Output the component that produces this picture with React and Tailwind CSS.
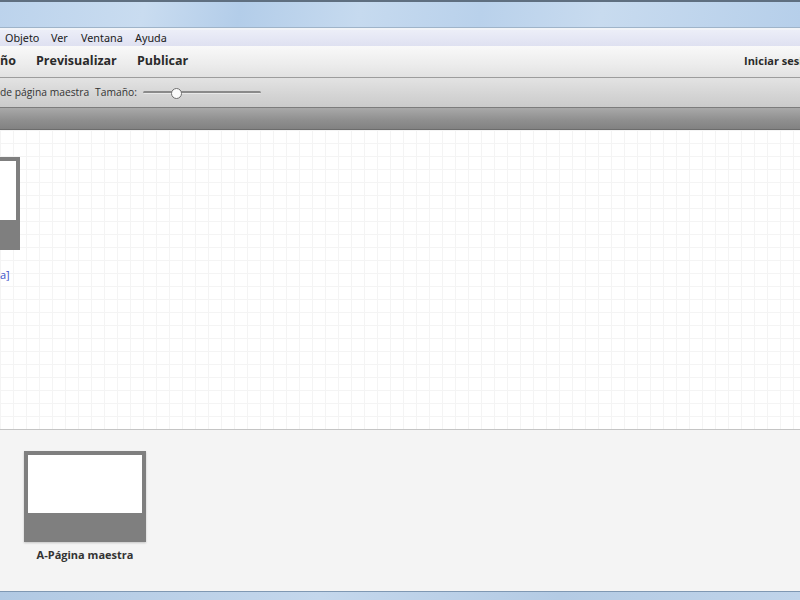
import React from "react";

export default function App() {
  return (
    <div className="w-[800px] h-[600px] overflow-hidden flex flex-col bg-[#f4f4f4] font-['Open_Sans','Liberation_Sans',sans-serif] text-[#222]">
      {/* Windows title bar */}
      <div className="h-[27px] shrink-0 border-t-2 border-[#5f6f80] bg-[linear-gradient(100deg,#bcd3ec_0%,#c9dcf0_18%,#b3cde9_30%,#c6daef_45%,#b9d1eb_60%,#c8dbef_75%,#b6cfea_100%)]" />
      <div className="h-[3px] shrink-0 border-t border-[#9fb4c9] bg-[#f2f4f8]" />
      {/* Menu bar */}
      <div className="h-[16px] shrink-0 flex items-center pl-[5px] text-[10.8px] leading-none text-[#1a1a1a] bg-[linear-gradient(#eceef8,#dfe1f1)] font-['Noto_Sans','Liberation_Sans',sans-serif]">
        <span className="w-[46px]">Objeto</span>
        <span className="w-[30px]">Ver</span>
        <span className="w-[54px]">Ventana</span>
        <span>Ayuda</span>
      </div>
      {/* Main toolbar */}
      <div className="h-[32px] shrink-0 flex items-center border-b border-[#9d9d9d] bg-[linear-gradient(#f9f9f9,#ececec_60%,#e2e2e2)] text-[12.5px] font-bold text-[#2a2a2a]">
        <span className="w-[36px]">ño</span>
        <span className="w-[101px]">Previsualizar</span>
        <span>Publicar</span>
        <span className="ml-auto whitespace-nowrap text-[11px] w-[56px] overflow-hidden">Iniciar sesión</span>
      </div>
      {/* Secondary toolbar */}
      <div className="h-[30px] shrink-0 flex items-center border-b border-[#7c7c7c] bg-[linear-gradient(#e3e3e3,#d4d4d4_60%,#cbcbcb)] text-[10.3px] text-[#333]">
        <span className="w-[95px] whitespace-nowrap">de página maestra</span>
        <span className="w-[48px]">Tamaño:</span>
        <div className="relative w-[118px] h-[12px] flex items-center">
          <div className="w-full h-[3px] rounded-full bg-[#8a8a8a] border-b border-[#e8e8e8]" />
          <div className="absolute left-[28px] top-[1px] w-[11px] h-[11px] rounded-full bg-[#fafafa] border border-[#6f6f6f]" />
        </div>
      </div>
      {/* Dark bar */}
      <div className="h-[22px] shrink-0 border-b border-[#6c6c6c] bg-[linear-gradient(#a9a9a9,#8e8e8e_60%,#828282)]" />
      {/* Canvas */}
      <div className="h-[300px] shrink-0 border-b border-[#c4c4c4] pt-[27px] bg-white bg-[linear-gradient(to_right,#f4f4f4_1px,transparent_1px),linear-gradient(to_bottom,#f4f4f4_1px,transparent_1px)] bg-[size:13px_13px]">
        <div className="w-[20px] h-[93px] border-[4px] border-l-0 border-[#7f7f7f] bg-[#7f7f7f] flex flex-col">
          <div className="h-[59px] bg-white" />
        </div>
        <div className="mt-[19px] text-[11px] leading-none text-[#3a52c8]">a]</div>
      </div>
      {/* Master pages panel */}
      <div className="flex-1 bg-[#f4f4f4] pl-[24px] pt-[21px]">
        <div className="w-[122px] flex flex-col items-center">
          <div className="w-[122px] h-[91px] border-[4px] border-[#7f7f7f] bg-[#7f7f7f] shadow-[0_1px_2px_rgba(0,0,0,0.2)]">
            <div className="h-[58px] bg-white" />
          </div>
          <div className="mt-[5px] text-[11px] font-bold text-[#333] whitespace-nowrap">A-Página maestra</div>
        </div>
      </div>
      {/* Bottom window border */}
      <div className="h-[9px] shrink-0 border-t border-[#7f98b3] bg-[linear-gradient(90deg,#b1c9e3,#c4d7ec_40%,#b4cbe4_70%,#c0d4ea)]" />
    </div>
  );
}
